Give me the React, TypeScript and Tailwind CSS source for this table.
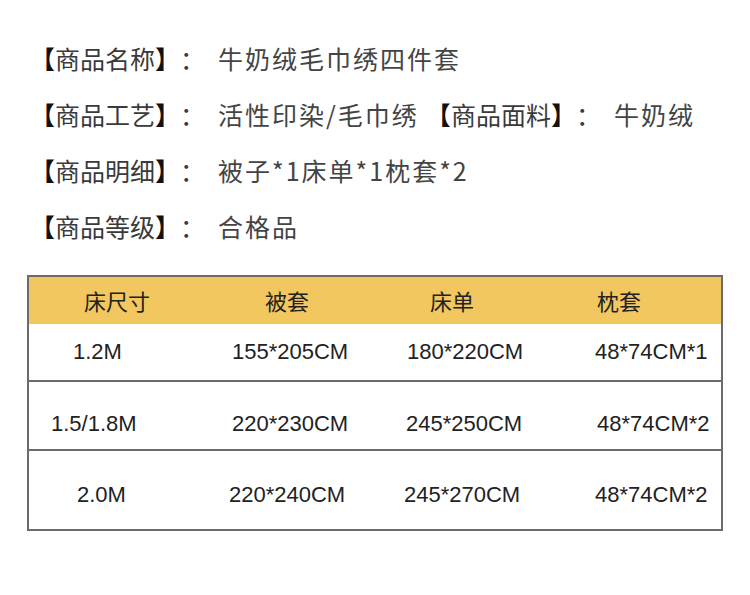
const CJK = "font-['Noto_Sans_CJK_SC','Noto_Sans',sans-serif]";

const INFO: { label: string; value: string }[][] = [
  [{ label: '商品名称', value: '牛奶绒毛巾绣四件套' }],
  [
    { label: '商品工艺', value: '活性印染/毛巾绣' },
    { label: '商品面料', value: '牛奶绒' },
  ],
  [{ label: '商品明细', value: '被子*1床单*1枕套*2' }],
  [{ label: '商品等级', value: '合格品' }],
];

const HEAD = [
  { text: '床尺寸', pl: 'pl-[55px]' },
  { text: '被套', pl: 'pl-[63px]' },
  { text: '床单', pl: 'pl-[55px]' },
  { text: '枕套', pl: 'pl-[49px]' },
];

const ROWS = [
  {
    h: 'h-[56px]',
    pt: 'pt-[16px]',
    cells: [
      { text: '1.2M', pl: 'pl-[44px]' },
      { text: '155*205CM', pl: 'pl-[30px]' },
      { text: '180*220CM', pl: 'pl-[32px]' },
      { text: '48*74CM*1', pl: 'pl-[47px]' },
    ],
  },
  {
    h: 'h-[69px]',
    pt: 'pt-[30px]',
    cells: [
      { text: '1.5/1.8M', pl: 'pl-[22px]' },
      { text: '220*230CM', pl: 'pl-[30px]' },
      { text: '245*250CM', pl: 'pl-[31px]' },
      { text: '48*74CM*2', pl: 'pl-[49px]' },
    ],
  },
  {
    h: 'h-[80px]',
    pt: 'pt-[32px]',
    cells: [
      { text: '2.0M', pl: 'pl-[48px]' },
      { text: '220*240CM', pl: 'pl-[27px]' },
      { text: '245*270CM', pl: 'pl-[29px]' },
      { text: '48*74CM*2', pl: 'pl-[47px]' },
    ],
  },
];

function InfoItem({ label, value }: { label: string; value: string }) {
  return (
    <span className="flex items-center">
      <span className="text-[#111] font-bold">【</span>
      <span className="text-[#3a3a3a]">{label}</span>
      <span className="text-[#111] font-bold">】</span>
      <span className="text-[#3a3a3a] w-[38px]">：</span>
      <span className="text-[#444] tracking-[2px]">{value}</span>
    </span>
  );
}

export default function App() {
  return (
    <div className={`w-[750px] h-[595px] bg-white ${CJK}`}>
      {/* product info */}
      <div className="pt-[30px] pl-[30px] text-[25px] leading-[56px]">
        {INFO.map((line, i) => (
          <div key={i} className="flex items-center gap-[7px]">
            {line.map((it) => (
              <InfoItem key={it.label} label={it.label} value={it.value} />
            ))}
          </div>
        ))}
      </div>

      {/* size table */}
      <div className="mt-[21px] ml-[27px] w-[696px] border-2 border-[#6b6b6b]">
        <div className="grid grid-cols-4 h-[47px] bg-[#f2c75f] items-center text-[22px] text-[#222]">
          {HEAD.map((c) => (
            <div key={c.text} className={c.pl}>
              {c.text}
            </div>
          ))}
        </div>
        {ROWS.map((r, i) => (
          <div
            key={i}
            className={`grid grid-cols-4 ${r.h} ${r.pt} ${
              i > 0 ? 'border-t-2 border-[#6b6b6b]' : ''
            } font-['Liberation_Sans',Arial,sans-serif] text-[22px] leading-[24px] text-[#222]`}
          >
            {r.cells.map((c, j) => (
              <div key={j} className={`${c.pl} whitespace-nowrap`}>
                {c.text}
              </div>
            ))}
          </div>
        ))}
      </div>
    </div>
  );
}
